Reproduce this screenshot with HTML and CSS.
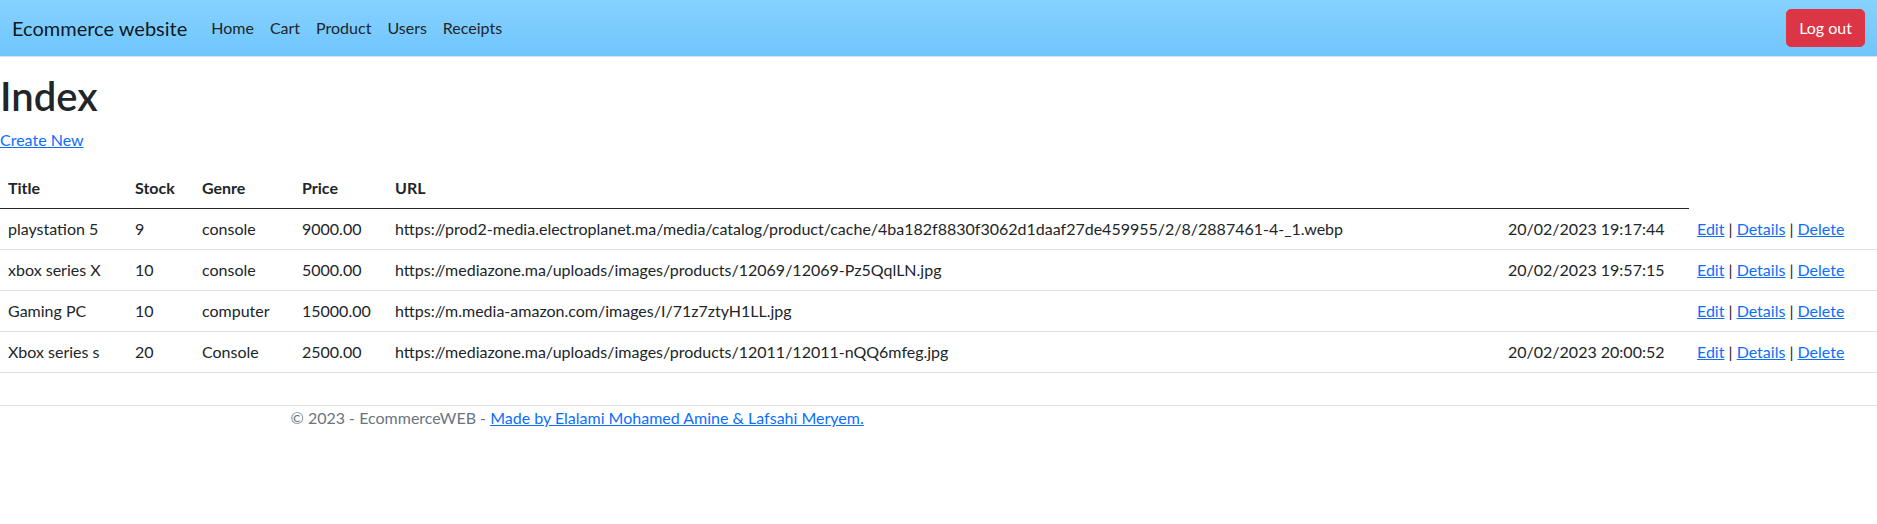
FILE: index.html
```html
<!DOCTYPE html>
<html lang="en">
<head>
<meta charset="utf-8">
<title>Index - Ecommerce website</title>
<link rel="stylesheet" href="styles.css">
</head>
<body>
<header>
  <nav class="navbar">
    <div class="navbar-inner">
      <a class="brand" href="#">Ecommerce website</a>
      <ul class="nav">
        <li><a class="nav-link" href="#">Home</a></li>
        <li><a class="nav-link" href="#">Cart</a></li>
        <li><a class="nav-link" href="#">Product</a></li>
        <li><a class="nav-link" href="#">Users</a></li>
        <li><a class="nav-link" href="#">Receipts</a></li>
      </ul>
      <button class="btn-logout" type="button">Log out</button>
    </div>
  </nav>
</header>
<main class="main">
  <h1 class="title">Index</h1>
  <p class="create"><a href="#">Create New</a></p>
  <table class="table">
    <colgroup>
      <col class="c-title">
      <col class="c-stock">
      <col class="c-genre">
      <col class="c-price">
      <col class="c-url">
      <col class="c-date">
      <col class="c-actions">
    </colgroup>
    <thead>
      <tr>
        <th>Title</th>
        <th>Stock</th>
        <th>Genre</th>
        <th>Price</th>
        <th>URL</th>
        <th></th>
      </tr>
    </thead>
    <tbody>
      <tr>
        <td>playstation 5</td>
        <td>9</td>
        <td>console</td>
        <td>9000.00</td>
        <td>https://prod2-media.electroplanet.ma/media/catalog/product/cache/4ba182f8830f3062d1daaf27de459955/2/8/2887461-4-_1.webp</td>
        <td>20/02/2023 19:17:44</td>
        <td><a href="#">Edit</a> | <a href="#">Details</a> | <a href="#">Delete</a></td>
      </tr>
      <tr>
        <td>xbox series X</td>
        <td>10</td>
        <td>console</td>
        <td>5000.00</td>
        <td>https://mediazone.ma/uploads/images/products/12069/12069-Pz5QqlLN.jpg</td>
        <td>20/02/2023 19:57:15</td>
        <td><a href="#">Edit</a> | <a href="#">Details</a> | <a href="#">Delete</a></td>
      </tr>
      <tr>
        <td>Gaming PC</td>
        <td>10</td>
        <td>computer</td>
        <td>15000.00</td>
        <td>https://m.media-amazon.com/images/I/71z7ztyH1LL.jpg</td>
        <td></td>
        <td><a href="#">Edit</a> | <a href="#">Details</a> | <a href="#">Delete</a></td>
      </tr>
      <tr>
        <td>Xbox series s</td>
        <td>20</td>
        <td>Console</td>
        <td>2500.00</td>
        <td>https://mediazone.ma/uploads/images/products/12011/12011-nQQ6mfeg.jpg</td>
        <td>20/02/2023 20:00:52</td>
        <td><a href="#">Edit</a> | <a href="#">Details</a> | <a href="#">Delete</a></td>
      </tr>
    </tbody>
  </table>
</main>
<footer class="footer">
  <div class="container">
    &copy; 2023 - EcommerceWEB - <a href="#">Made by Elalami Mohamed Amine &amp; Lafsahi Meryem.</a>
  </div>
</footer>
</body>
</html>
```
FILE: styles.css
```css
* { box-sizing: border-box; }

html, body {
  margin: 0;
  padding: 0;
}

body {
  font-family: "Lato", "Noto Sans", sans-serif;
  font-size: 16px;
  line-height: 1.5;
  color: #212529;
  background: #fff;
}

a {
  color: #0d6efd;
  text-decoration: underline;
}

/* Navbar */
.navbar {
  background: linear-gradient(180deg, #87d1ff 0%, #6fc6fd 100%);
  box-shadow: 0 1px 0 #cfe6f5;
  padding: 8px 0;
  margin-bottom: 16px;
}

.navbar-inner {
  display: flex;
  align-items: center;
  padding: 0 12px;
}

.brand {
  font-size: 20px;
  line-height: 30px;
  padding: 5px 0;
  margin-right: 16px;
  color: rgba(0, 0, 0, 0.9);
  text-decoration: none;
}

.nav {
  display: flex;
  list-style: none;
  margin: 0;
  padding: 0;
  flex: 1;
}

.nav-link {
  display: block;
  padding: 8px;
  color: #212529;
  text-decoration: none;
}

.btn-logout {
  font-family: inherit;
  font-size: 16px;
  line-height: 24px;
  padding: 6px 12px;
  color: #fff;
  background: #dc3545;
  border: 1px solid #dc3545;
  border-radius: 5px;
}

/* Main */
.main {
  padding-bottom: 16px;
}

.title {
  font-size: 40px;
  font-weight: 600;
  line-height: 1.2;
  margin: 0 0 8px;
}

.create {
  margin: 0 0 16px;
}

.table {
  width: 100%;
  table-layout: fixed;
  border-collapse: collapse;
  margin-bottom: 16px;
  white-space: nowrap;
}

.c-title { width: 127px; }
.c-stock { width: 67px; }
.c-genre { width: 100px; }
.c-price { width: 93px; }
.c-url { width: 1113px; }
.c-date { width: 189px; }
.c-actions { width: 188px; }

.table th,
.table td {
  padding: 8px;
  text-align: left;
  vertical-align: top;
}

.table th {
  font-weight: 700;
  border-bottom: 1px solid #212529;
}

.table td {
  border-bottom: 1px solid #dee2e6;
}

/* Footer */
.footer {
  border-top: 1px solid #dee2e6;
  color: #6c757d;
}

.container {
  max-width: 1320px;
  margin: 0 auto;
  padding: 0 12px;
}
```
